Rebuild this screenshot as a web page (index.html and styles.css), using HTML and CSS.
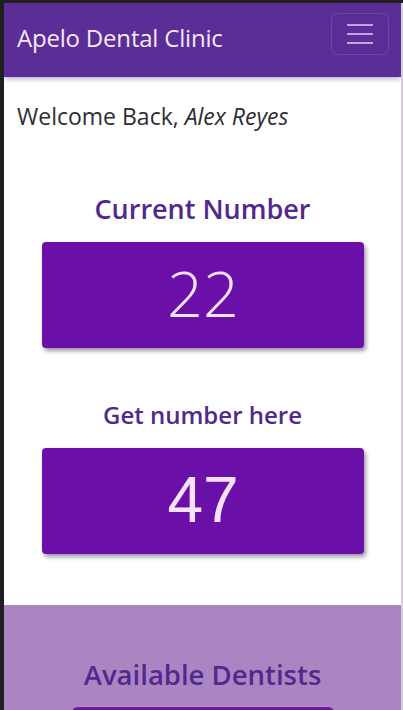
FILE: index.html
```html
<!DOCTYPE html>
<html lang="en">
<head>
<meta charset="utf-8">
<title>Apelo Dental Clinic</title>
<link rel="stylesheet" href="styles.css">
</head>
<body>
<div class="page">
  <nav class="navbar">
    <span class="brand">Apelo Dental Clinic</span>
    <button class="toggler" aria-label="Menu">
      <svg width="26" height="20" viewBox="0 0 26 20"><path d="M0 1h26M0 10h26M0 19h26" stroke="#c9a0e6" stroke-width="2"/></svg>
    </button>
  </nav>
  <main class="content">
    <p class="welcome">Welcome Back, <em>Alex Reyes</em></p>
    <section class="queue">
      <h2 class="label label-current">Current Number</h2>
      <div class="numbox"><span class="num num-current">22</span></div>
      <h2 class="label label-get">Get number here</h2>
      <div class="numbox"><span class="num num-get">47</span></div>
    </section>
  </main>
  <section class="dentists">
    <h2 class="dentists-title">Available Dentists</h2>
    <div class="dentist-card"></div>
  </section>
</div>
</body>
</html>
```
FILE: styles.css
```css
html, body {
  margin: 0;
  padding: 0;
  background: #1f1f21;
  overflow: hidden;
}
body {
  padding: 3px 0 0 4px;
  height: 710px;
  box-sizing: border-box;
}
.page {
  width: 397px;
  height: 707px;
  background: #fff;
  border-right: 2px solid #d9cbe0;
  overflow: hidden;
  font-family: "Open Sans", "Noto Sans", sans-serif;
}
.navbar {
  height: 74px;
  background: #5b2d97;
  display: flex;
  align-items: center;
  justify-content: space-between;
  padding: 0 12px 0 13px;
  box-sizing: border-box;
  box-shadow: 0 2px 5px rgba(60, 20, 100, 0.35);
  position: relative;
}
.brand {
  color: #f5e8f7;
  font-size: 24px;
  letter-spacing: -0.2px;
  padding-bottom: 6px;
}
.toggler {
  width: 58px;
  height: 42px;
  margin-top: -12px;
  border: 1px solid rgba(255, 255, 255, 0.12);
  border-radius: 7px;
  background: transparent;
  display: flex;
  align-items: center;
  justify-content: center;
  padding: 0;
}
.content {
  padding: 24px 0 51px;
}
.welcome {
  margin: 0 0 0 13px;
  font-size: 23px;
  color: #2e2e32;
  line-height: 30px;
}
.welcome em {
  font-style: italic;
}
.queue {
  display: flex;
  flex-direction: column;
  align-items: center;
}
.label {
  margin: 0;
  font-weight: 600;
  color: #4f2a8c;
  text-align: center;
}
.label-current {
  font-size: 27px;
  margin-top: 58px;
  line-height: 40px;
  margin-bottom: 13px;
}
.label-get {
  font-size: 24px;
  margin-top: 49px;
  line-height: 36px;
  margin-bottom: 15px;
}
.numbox {
  width: 322px;
  height: 106px;
  background: #6a10a8;
  border-radius: 4px;
  box-shadow: 2px 3px 4px rgba(40, 20, 60, 0.45);
  display: flex;
  align-items: center;
  justify-content: center;
  margin-left: 1px;
}
.num {
  color: #f7e2fb;
  line-height: 1;
}
.num-current {
  font-family: "Open Sans", "Noto Sans", sans-serif;
  font-weight: 300;
  font-size: 63px;
  margin-top: -6px;
}
.num-get {
  font-family: "Liberation Sans", Arial, sans-serif;
  font-size: 64px;
  margin-top: -2px;
}
.dentists {
  background: #ab85c1;
  height: 200px;
  padding-top: 50px;
  box-sizing: border-box;
  display: flex;
  flex-direction: column;
  align-items: center;
}
.dentists-title {
  margin: 0;
  font-weight: 600;
  font-size: 27.5px;
  color: #4f2a8c;
  line-height: 40px;
}
.dentist-card {
  width: 262px;
  height: 80px;
  margin-top: 11px;
  background: #6a1b9a;
  border-top: 1px solid #c08ad8;
  border-radius: 6px 6px 0 0;
}
```
